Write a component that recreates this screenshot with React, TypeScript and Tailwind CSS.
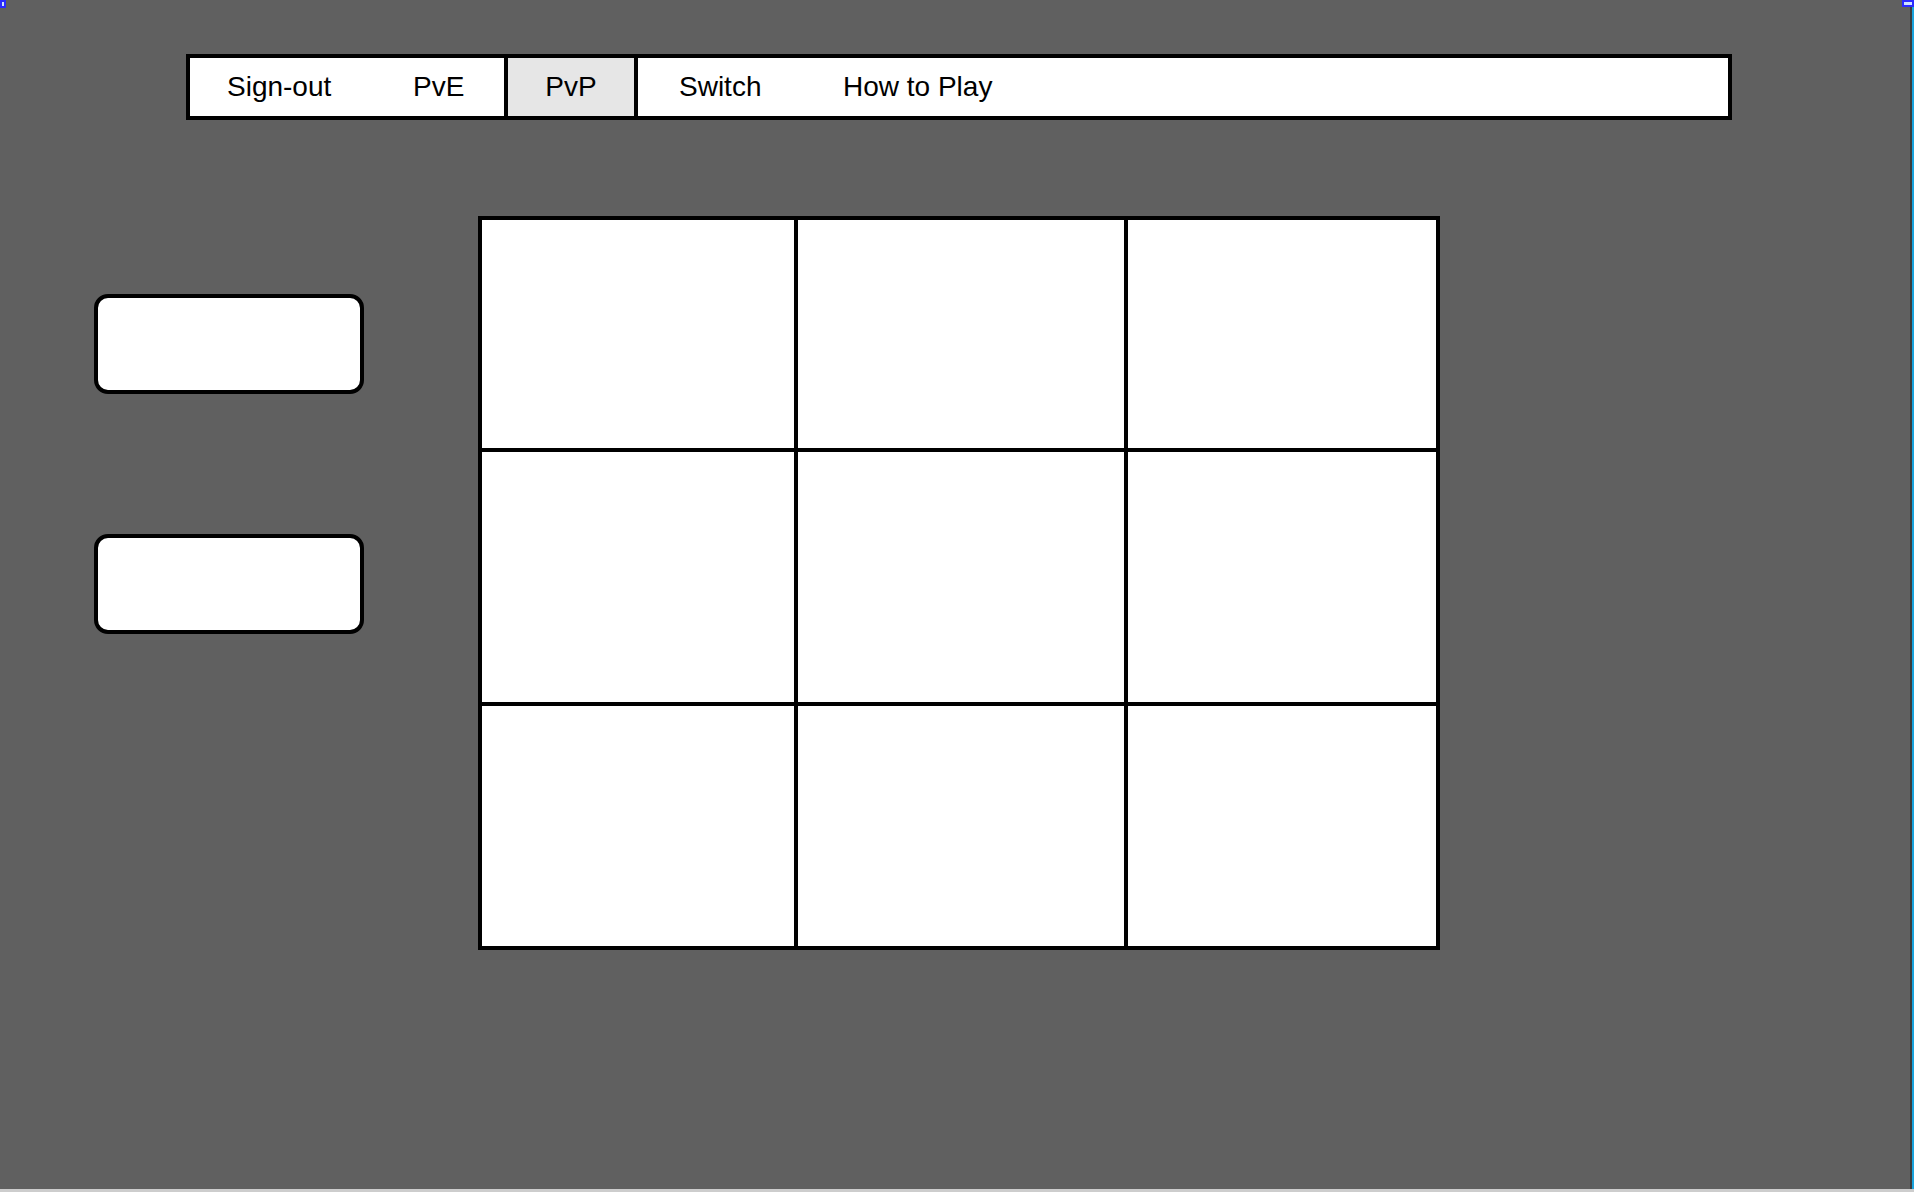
import React from "react";

export default function App() {
  const font = { fontFamily: '"Liberation Sans", Arial, sans-serif' };
  return (
    <div
      className="relative w-[1914px] h-[1192px] bg-[#606060] overflow-hidden"
      style={font}
    >
      {/* selection handles / edges */}
      <div className="absolute left-0 top-0 w-[6px] h-[8px] border-2 border-[#2b2bff] bg-[#cfe3ff]" />
      <div className="absolute right-0 top-0 w-[12px] h-[7px] border-2 border-[#2b2bff] bg-[#cfe3ff]" />
      <div className="absolute right-[2px] top-[7px] bottom-[3px] w-[2px] bg-[#3c3c3c]" />
      <div className="absolute right-0 top-[7px] bottom-[3px] w-[2px] bg-[#1aa3dd]" />
      <div className="absolute left-0 right-0 bottom-0 h-[3px] bg-[#cdcdcd]" />

      <div className="flex flex-col pt-[54px]">
        {/* nav */}
        <div className="ml-[186px] w-[1546px] h-[66px] border-4 border-black bg-white flex items-stretch text-[28px] text-black leading-none">
          <div className="w-[314px] flex items-stretch shrink-0">
            <div className="w-[223px] flex items-center pl-[37px] shrink-0">Sign-out</div>
            <div className="flex items-center">PvE</div>
          </div>
          <div className="w-[4px] bg-black shrink-0" />
          <div className="w-[126px] bg-[#e6e6e6] flex items-center justify-center shrink-0">PvP</div>
          <div className="w-[4px] bg-black shrink-0" />
          <div className="w-[205px] flex items-center pl-[41px] shrink-0">Switch</div>
          <div className="flex items-center">How to Play</div>
        </div>

        {/* content */}
        <div className="flex items-start mt-[96px]">
          <div className="ml-[94px] mt-[78px] flex flex-col gap-[140px]">
            <div className="w-[270px] h-[100px] border-4 border-black rounded-[14px] bg-white" />
            <div className="w-[270px] h-[100px] border-4 border-black rounded-[14px] bg-white" />
          </div>

          <div className="ml-[114px] grid grid-cols-[312px_326px_308px] grid-rows-[228px_250px_240px] gap-[4px] p-[4px] bg-black">
            {Array.from({ length: 9 }).map((_, i) => (
              <div key={i} className="bg-white" />
            ))}
          </div>
        </div>
      </div>
    </div>
  );
}
